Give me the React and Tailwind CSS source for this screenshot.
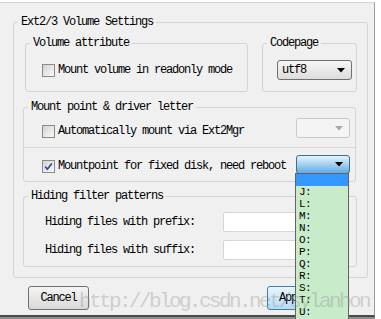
import React from "react";

// --- small pieces ---
const Arrow = ({ color = "#000" }) => (
  <svg width="8" height="5" viewBox="0 0 8 5" className="shrink-0">
    <polygon points="0,0 8,0 4,4.5" fill={color} />
  </svg>
);

const CheckBox = ({ checked }) => (
  <span className="flex items-center justify-center w-[13px] h-[13px] shrink-0 border border-[#8a8a8a] bg-linear-to-br from-[#d2d2d2] to-[#fbfbfb]">
    {checked && (
      <svg width="9" height="9" viewBox="0 0 9 9">
        <path d="M1.2 4.6 L3.4 7.2 L7.8 1.4" fill="none" stroke="#2d4d8c" strokeWidth="1.7" />
      </svg>
    )}
  </span>
);

const GroupBox = ({ title, className, children }) => (
  <fieldset className={`border border-[#d3d3d3] rounded-[3px] ${className}`}>
    <legend className="ml-[4px] px-[3px] leading-[12px]">{title}</legend>
    {children}
  </fieldset>
);

const drives = ["J:", "L:", "M:", "N:", "O:", "P:", "Q:", "R:", "S:", "T:", "U:"];

export default function App() {
  return (
    <div className="relative w-[381px] h-[319px] bg-white overflow-hidden font-[family-name:Liberation_Mono,monospace] text-[12px] tracking-[-1.2px] text-black">
      {/* dialog panel */}
      <div className="mt-[2px] w-[375px] h-[315px] border-t border-r border-b-2 border-t-[#d4d4d4] border-r-[#9c9c9c] border-b-[#4a4a4a] bg-[#f0f0f0]">
        <GroupBox title="Ext2/3 Volume Settings" className="mt-[13px] ml-[13px] w-[355px] h-[262px]">
          {/* Volume attribute + Codepage */}
          <div className="flex mt-[9px] ml-[11px]">
            <GroupBox title="Volume attribute" className="w-[223px] h-[55px]">
              <div className="flex items-center gap-[3px] mt-[15px] ml-[16px]">
                <CheckBox />
                <span className="leading-[13px]">Mount volume in readonly mode</span>
              </div>
            </GroupBox>
            <GroupBox title="Codepage" className="ml-[14px] w-[95px] h-[55px]">
              <div className="flex items-center justify-between mt-[11px] ml-[14px] w-[75px] h-[20px] pl-[4px] pr-[6px] border border-[#707070] rounded-[3px] bg-linear-to-b from-[#f6f6f6] to-[#dddddd]">
                <span>utf8</span>
                <Arrow />
              </div>
            </GroupBox>
          </div>

          {/* Mount point */}
          <GroupBox title="Mount point & driver letter" className="mt-[9px] ml-[9px] w-[333px] h-[81px]">
            <div className="flex items-start h-[34px] pl-[18px] pr-[5px]">
              <div className="flex items-center gap-[3px] mt-[12px]">
                <CheckBox />
                <span className="leading-[13px]">Automatically mount via Ext2Mgr</span>
              </div>
              <div className="flex items-center justify-end ml-auto mt-[5px] w-[54px] h-[20px] pr-[6px] border border-[#c9c9c9] rounded-[3px] bg-[#f4f4f4]">
                <Arrow color="#a8a8a8" />
              </div>
            </div>
            <div className="h-px bg-[#dadada]" />
            <div className="flex items-start h-[33px] pl-[18px] pr-[5px]">
              <div className="flex items-center gap-[3px] mt-[12px]">
                <CheckBox checked />
                <span className="leading-[13px]">Mountpoint for fixed disk, need reboot</span>
              </div>
              <div className="flex items-center justify-end ml-auto mt-[7px] w-[54px] h-[19px] pr-[6px] border border-[#3c6e97] rounded-[3px] bg-linear-to-b from-[#e4f3fc] to-[#5eaae2]">
                <Arrow />
              </div>
            </div>
          </GroupBox>

          {/* Hiding filter */}
          <GroupBox title="Hiding filter patterns" className="mt-[8px] ml-[9px] w-[334px] h-[77px]">
            <div className="flex items-center mt-[10px] pl-[21px]">
              <span className="w-[178px]">Hiding files with prefix:</span>
              <div className="w-[122px] h-[20px] border border-[#d6d6d6] rounded-[2px] bg-white" />
            </div>
            <div className="flex items-center mt-[8px] pl-[21px]">
              <span className="w-[178px]">Hiding files with suffix:</span>
              <div className="w-[122px] h-[20px] border border-[#d6d6d6] rounded-[2px] bg-white" />
            </div>
          </GroupBox>
        </GroupBox>

        {/* Buttons */}
        <div className="flex mt-[8px] ml-[28px]">
          <button className="w-[61px] h-[24px] border border-[#707070] rounded-[3px] bg-linear-to-b from-[#f4f4f4] to-[#d9d9d9] leading-[22px]">
            Cancel
          </button>
          <button className="ml-[178px] w-[60px] h-[24px] border border-[#3c7fb1] rounded-[3px] bg-linear-to-b from-[#e8f5fd] to-[#b4dcf5] leading-[22px] text-left pl-[11px]">
            Apply
          </button>
        </div>
      </div>
      <div className="w-[375px] h-[2px] bg-[#8e8e8e]" />

      {/* open drop-down list */}
      <div className="absolute left-[295px] top-[173px] w-[54px] h-[160px] border border-[#646464] bg-[#c8ebca]">
        <div className="h-[12px] bg-[#3399ff]" />
        {drives.map((d) => (
          <div key={d} className="h-[12px] leading-[12px] pl-[3px] text-[11px] tracking-[-0.5px]">
            {d}
          </div>
        ))}
      </div>

      {/* watermark */}
      <div className="absolute left-[79px] top-[291px] text-[21px] leading-[21px] tracking-[-2.6px] text-[#8c8c8c]/35 whitespace-nowrap pointer-events-none">
        http://blog.csdn.net/sylanhon
      </div>
    </div>
  );
}
